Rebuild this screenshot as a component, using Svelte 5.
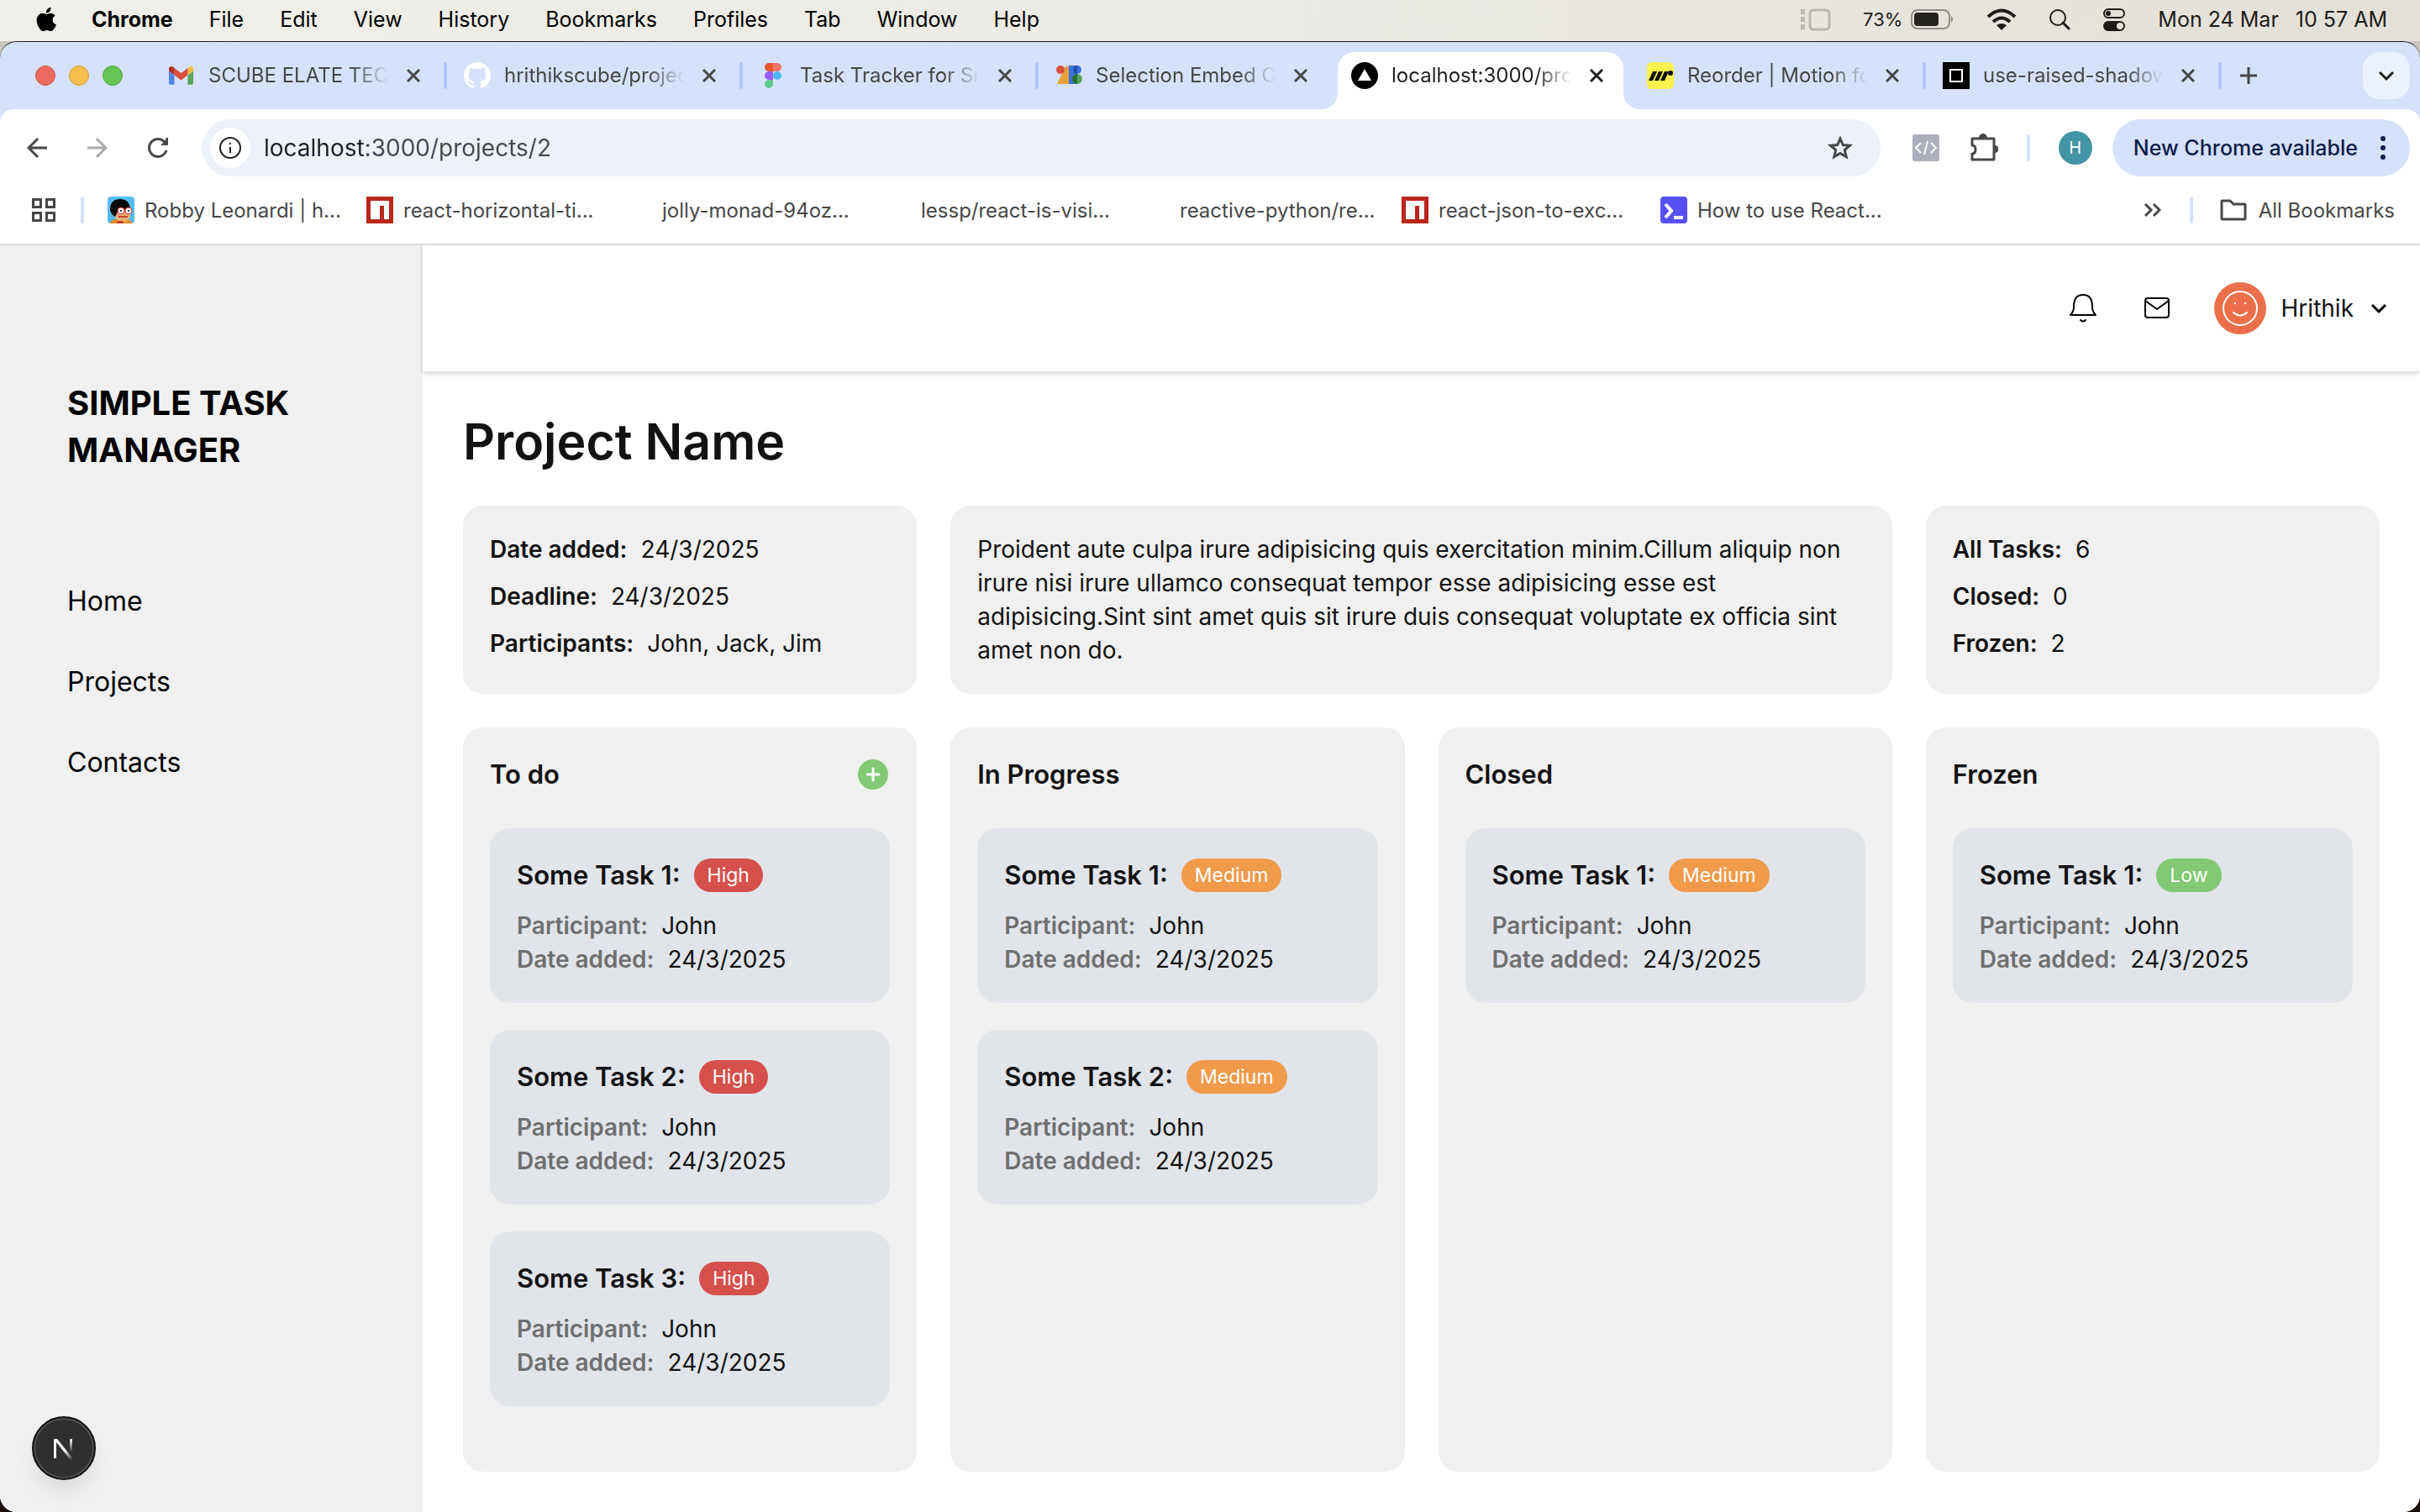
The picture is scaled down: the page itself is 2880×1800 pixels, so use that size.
<script>
  const menus = ['File', 'Edit', 'View', 'History', 'Bookmarks', 'Profiles', 'Tab', 'Window', 'Help'];

  const tabs = [
    { icon: 'gmail', title: 'SCUBE ELATE TECH' },
    { icon: 'github', title: 'hrithikscube/project' },
    { icon: 'figma', title: 'Task Tracker for Small' },
    { icon: 'shapes', title: 'Selection Embed Co' },
    { icon: 'vercel', title: 'localhost:3000/projects', active: true },
    { icon: 'motion', title: 'Reorder | Motion for' },
    { icon: 'sandbox', title: 'use-raised-shadow' }
  ];

  const bookmarks = [
    { icon: 'robby', title: 'Robby Leonardi | h...' },
    { icon: 'npm', title: 'react-horizontal-ti...' },
    { icon: '', title: 'jolly-monad-94oz...' },
    { icon: '', title: 'lessp/react-is-visi...' },
    { icon: '', title: 'reactive-python/re...' },
    { icon: 'npm', title: 'react-json-to-exc...' },
    { icon: 'prompt', title: 'How to use React...' }
  ];

  const nav = ['Home', 'Projects', 'Contacts'];

  const details = [
    ['Date added:', '24/3/2025'],
    ['Deadline:', '24/3/2025'],
    ['Participants:', 'John, Jack, Jim']
  ];
  const totals = [
    ['All Tasks:', '6'],
    ['Closed:', '0'],
    ['Frozen:', '2']
  ];

  const columns = [
    { name: 'To do', canAdd: true, priority: 'High', tasks: ['Some Task 1:', 'Some Task 2:', 'Some Task 3:'] },
    { name: 'In Progress', priority: 'Medium', tasks: ['Some Task 1:', 'Some Task 2:'] },
    { name: 'Closed', priority: 'Medium', tasks: ['Some Task 1:'] },
    { name: 'Frozen', priority: 'Low', tasks: ['Some Task 1:'] }
  ];

  let url = $state('localhost:3000/projects/2');
</script>

{#snippet favicon(name)}
  <svg class="favicon" viewBox="0 0 32 32" aria-hidden="true">
    {#if name === 'gmail'}
      <g transform="translate(1 5) scale(.33) translate(-52 -42)">
        <path fill="#4f86ec" d="M58 108h14V74L52 59v43c0 3.3 2.7 6 6 6" />
        <path fill="#58a55c" d="M120 108h14c3.3 0 6-2.7 6-6V59l-20 15" />
        <path fill="#f2bd42" d="M120 48v26l20-15v-8c0-7.4-8.5-11.6-14.4-7.2" />
        <path fill="#d95140" d="M72 74V48l24 18 24-18v26L96 92" />
        <path fill="#b5332a" d="M52 51v8l20 15V48l-5.6-4.2c-5.9-4.4-14.4-.2-14.4 7.2" />
      </g>
    {:else if name === 'github'}
      <path fill="#fff" transform="scale(2)" d="M8 0C3.58 0 0 3.58 0 8c0 3.54 2.29 6.53 5.47 7.59.4.07.55-.17.55-.38 0-.19-.01-.82-.01-1.49-2.01.37-2.53-.49-2.69-.94-.09-.23-.48-.94-.82-1.13-.28-.15-.68-.52-.01-.53.63-.01 1.08.58 1.23.82.72 1.21 1.87.87 2.33.66.07-.52.28-.87.51-1.07-1.78-.2-3.64-.89-3.64-3.95 0-.87.31-1.59.82-2.15-.08-.2-.36-1.02.08-2.12 0 0 .67-.21 2.2.82.64-.18 1.32-.27 2-.27s1.36.09 2 .27c1.53-1.04 2.2-.82 2.2-.82.44 1.1.16 1.92.08 2.12.51.56.82 1.27.82 2.15 0 3.07-1.87 3.75-3.65 3.95.29.25.54.73.54 1.48 0 1.07-.01 1.93-.01 2.2 0 .21.15.46.55.38A8.01 8.01 0 0 0 16 8c0-4.42-3.58-8-8-8z" />
    {:else if name === 'figma'}
      <path fill="#e5592f" d="M16 1h-5a5 5 0 0 0 0 10h5z" />
      <path fill="#f0766b" d="M16 1h5a5 5 0 0 1 0 10h-5z" />
      <path fill="#9b5cf6" d="M16 11h-5a5 5 0 0 0 0 10h5z" />
      <circle cx="21" cy="16" r="5" fill="#50b7f8" />
      <path fill="#5ecb8b" d="M11 21h5v5a5 5 0 1 1-5-5z" />
    {:else if name === 'shapes'}
      <path fill="#e8a13a" d="M12 5h5v21H2z" />
      <circle cx="6" cy="9" r="5" fill="#d9503f" />
      <path fill="#3b72dc" d="M16 4h10v22H16z" />
      <circle cx="26" cy="9" r="5" fill="#3b72dc" />
      <path fill="#2450a8" d="M26 4v10a5 5 0 0 1 0-10z" />
      <circle cx="26" cy="20" r="6" fill="#56a55b" />
      <path fill="#2b6a35" d="M26 14v12a6 6 0 0 1 0-12z" />
    {:else if name === 'vercel'}
      <circle cx="16" cy="16" r="16" fill="#000" />
      <path fill="#fff" d="M16 8l8 14H8z" />
    {:else if name === 'motion'}
      <rect width="32" height="32" rx="6" fill="#fdf250" />
      <path fill="#111" d="M7 11h5L7 22H2zM14 11h5l-5 11H9zM21 11h5l-5 11h-5z" />
      <circle cx="28" cy="13" r="3" fill="#111" />
    {:else if name === 'sandbox'}
      <rect width="32" height="32" fill="#000" />
      <rect x="9" y="9" width="14" height="14" fill="none" stroke="#fff" stroke-width="2" />
    {:else if name === 'npm'}
      <rect width="32" height="32" fill="#b9261c" />
      <path fill="#fff" d="M5 5h22v22h-6V11h-5v16H5z" />
    {:else if name === 'robby'}
      <rect width="32" height="32" rx="4" fill="#56bcf2" />
      <path fill="#e98c28" d="M2 32q4-6 14-5 11-1 14 5z" />
      <path fill="#e9b27c" d="M5 14h22v10q-2 6-9 6t-9-6l-5-4z" />
      <path fill="#080808" d="M3 16Q3 3 15 3q11 0 12 12l-14 1-4 8-4-3z" />
      <g fill="#fff" stroke="#d8262c">
        <circle cx="16" cy="17" r="4" />
        <circle cx="25" cy="17" r="4" />
      </g>
      <circle cx="16" cy="17" r="1" />
      <circle cx="25" cy="17" r="1" />
      <path fill="#c8452c" d="M13 23h11v2H13zM11 29h8v3h-8z" />
    {:else if name === 'prompt'}
      <rect width="32" height="32" rx="4" fill="#5651f5" />
      <path fill="none" stroke="#fff" stroke-width="4" d="M6 9l7 8-7 8M16 25h11" />
    {/if}
  </svg>
{/snippet}

<div class="desktop">
  <div class="menubar">
    <svg class="apple" viewBox="0 0 27 32" aria-hidden="true">
      <path d="M22.6 17c0-3.500 2.600-5.100 2.800-5.200-1.600-2.300-4-2.600-4.800-2.700-2-.2-4 1.200-5 1.200s-2.600-1.200-4.300-1.100c-2.200 0-4.300 1.300-5.400 3.300-2.400 4.100-.6 10.100 1.700 13.400 1.100 1.600 2.500 3.400 4.200 3.400 1.700-.1 2.300-1.100 4.400-1.100s2.600 1.100 4.400 1c1.800 0 3-1.600 4.100-3.300 1.300-1.900 1.800-3.700 1.900-3.800-.1 0-4-1.500-4-5.100zM19.300 7c.9-1.200 1.500-2.700 1.400-4.300-1.400.1-3 .9-4 2.100-.9 1-1.600 2.600-1.400 4.100 1.500.1 3.100-.8 4-1.900z" />
    </svg>
    <strong>Chrome</strong>
    {#each menus as m}<span>{m}</span>{/each}
    <div class="status">
      <svg class="stage" viewBox="0 0 36 28" width="36" height="28" aria-hidden="true">
        <path fill="#b9b7b1" d="M0 2h5v6H0zM0 11h5v6H0zM0 20h5v6H0z" />
        <rect x="11" y="3" width="23" height="23" rx="4" fill="none" stroke="#b9b7b1" stroke-width="3" />
      </svg>
      <span class="battery">
        <span>73%</span>
        <svg viewBox="0 0 52 26" width="52" height="26" aria-hidden="true">
          <rect x="1" y="2" width="45" height="22" rx="7" fill="none" stroke="#8f8d88" stroke-width="2" />
          <rect x="4" y="5" width="29" height="16" rx="4" fill="#242320" />
          <path fill="#8f8d88" d="M48 9q4 4 0 8z" />
        </svg>
      </span>
      <svg viewBox="0 0 36 26" width="36" height="26" aria-hidden="true">
        <path fill="none" stroke="#1d1c1a" stroke-width="4" d="M2 10q16-15 32 0M8 16q10-9 20 0" />
        <path fill="#1d1c1a" d="M12 20q6-4 12 0l-6 6z" />
      </svg>
      <svg viewBox="0 0 26 26" width="26" height="26" aria-hidden="true">
        <circle cx="11" cy="11" r="9" fill="none" stroke="#1d1c1a" stroke-width="2" />
        <path d="M17 17l7 7" stroke="#1d1c1a" stroke-width="3" stroke-linecap="round" />
      </svg>
      <svg viewBox="0 0 28 28" width="28" height="28" aria-hidden="true">
        <rect x="2" y="2" width="24" height="10" rx="5" fill="none" stroke="#1d1c1a" stroke-width="2" />
        <circle cx="7" cy="7" r="3" fill="#1d1c1a" />
        <rect x="1" y="16" width="26" height="12" rx="6" fill="#1d1c1a" />
        <circle cx="21" cy="22" r="4" fill="#e5e3dc" />
      </svg>
      <span class="clock"><span>Mon 24 Mar</span><span>10 57 AM</span></span>
    </div>
  </div>

  <div class="window">
    <div class="tabstrip">
      <div class="lights">
        <button class="light red" aria-label="Close window"></button>
        <button class="light yellow" aria-label="Minimise window"></button>
        <button class="light green" aria-label="Zoom window"></button>
      </div>
      {#each tabs as tab, i}
        <div class="tab" class:active={tab.active}>
          {@render favicon(tab.icon)}
          <span class="tab-title">{tab.title}</span>
          <button class="close" aria-label="Close tab">
            <svg viewBox="0 0 16 16" width="16" height="16"><path d="M1 1l14 14M15 1L1 15" /></svg>
          </button>
          <i class="sep" class:hidden={tab.active || tabs[i + 1]?.active}></i>
        </div>
      {/each}
      <button class="plus" aria-label="New tab">
        <svg viewBox="0 0 20 20" width="20" height="20"><path d="M10 0v20M0 10h20" /></svg>
      </button>
      <button class="tab-search" aria-label="Search tabs">
        <svg viewBox="0 0 20 20" width="20" height="20"><path d="M2 6l8 8 8-8" /></svg>
      </button>
    </div>

    <div class="chrome">
      <div class="toolbar">
        <button aria-label="Back">
          <svg viewBox="0 0 24 24" width="36" height="36"><path fill="#474747" d="M20 11H7.800l5.600-5.600L12 4l-8 8 8 8 1.400-1.400L7.800 13H20z" /></svg>
        </button>
        <button aria-label="Forward">
          <svg viewBox="0 0 24 24" width="36" height="36"><path fill="#ababab" d="M4 11h12.200l-5.600-5.600L12 4l8 8-8 8-1.400-1.400 5.600-5.600H4z" /></svg>
        </button>
        <button aria-label="Reload">
          <svg viewBox="0 0 24 24" width="36" height="36"><path fill="#474747" d="M17.650 6.350A7.960 7.960 0 0 0 12 4a8 8 0 1 0 7.730 10h-2.080A6 6 0 1 1 12 6c1.660 0 3.140.69 4.220 1.780L14 10h6V4h-1.600z" /></svg>
        </button>
        <div class="omnibox">
          <span class="info">
            <svg viewBox="0 0 26 26" width="26" height="26" aria-hidden="true">
              <circle cx="13" cy="13" r="12" fill="none" stroke="#1f1f1f" stroke-width="2" />
              <path d="M13 12v7M13 7v2" stroke="#1f1f1f" stroke-width="2" />
            </svg>
          </span>
          <input aria-label="Address" bind:value={url} />
          <button aria-label="Bookmark this page">
            <svg viewBox="0 0 32 32" width="32" height="32"><path fill="none" stroke="#474747" stroke-width="3" d="M16 5l3.300 7.500 8.200.7-6.200 5.400 1.900 8L16 22.400l-7.200 4.200 1.900-8-6.200-5.400 8.200-.7z" /></svg>
          </button>
        </div>
        <div class="extensions">
          <button aria-label="Developer tools">
            <svg viewBox="0 0 32 32" width="32" height="32">
              <rect width="32" height="32" rx="2" fill="#adb0bb" />
              <path fill="none" stroke="#fff" stroke-width="2" d="M10 10l-6 6 6 6M22 10l6 6-6 6M18 8l-4 16" />
            </svg>
          </button>
          <button aria-label="Extensions">
            <svg viewBox="0 0 36 36" width="36" height="36">
              <path fill="none" stroke="#474747" stroke-width="3" stroke-linejoin="round" d="M5 7h26v25H5v-7q4 0 4-5t-4-5z" />
              <path fill="#474747" d="M13 6a5 5 0 0 1 10 0zM32 15a4 4 0 0 1 0 9z" />
            </svg>
          </button>
          <i class="sep pale"></i>
          <button class="profile" aria-label="Profile">H</button>
        </div>
        <button class="update">
          New Chrome available
          <svg viewBox="0 0 8 28" width="8" height="28" aria-hidden="true"><circle cx="4" cy="3" r="3" /><circle cx="4" cy="14" r="3" /><circle cx="4" cy="25" r="3" /></svg>
        </button>
      </div>

      <div class="bookmarks">
        <button aria-label="Apps">
          <svg viewBox="0 0 32 32" width="32" height="32"><path fill="none" stroke="#474747" stroke-width="3" d="M3.500 3.500h9v9h-9zM19.500 3.500h9v9h-9zM3.500 19.500h9v9h-9zM19.500 19.500h9v9h-9z" /></svg>
        </button>
        <i class="sep pale"></i>
        <div class="links">
          {#each bookmarks as b}
            <a href="#bookmark">{@render favicon(b.icon)}<span>{b.title}</span></a>
          {/each}
        </div>
        <button class="more" aria-label="More bookmarks">
          <svg viewBox="0 0 20 18" width="20" height="18"><path fill="none" stroke="#474747" stroke-width="3" d="M1 2l7 7-7 7M11 2l7 7-7 7" /></svg>
        </button>
        <i class="sep pale"></i>
        <button class="all">
          <svg viewBox="0 0 32 26" width="32" height="26" aria-hidden="true"><path fill="none" stroke="#474747" stroke-width="3" stroke-linejoin="round" d="M2 3q0-1 1-1h9l4 4h13q1 0 1 1v16q0 1-1 1H3q-1 0-1-1z" /></svg>
          All Bookmarks
        </button>
      </div>
    </div>

    <div class="app">
      <aside>
        <h2>SIMPLE TASK MANAGER</h2>
        <nav>
          {#each nav as n}<a href="#{n}">{n}</a>{/each}
        </nav>
      </aside>

      <div class="content">
        <header>
          <button aria-label="Notifications">
            <svg viewBox="0 0 40 40" width="40" height="40"><path fill="none" stroke="#000" stroke-width="2" stroke-linecap="round" stroke-linejoin="round" d="M5 28h30q-4-4-4-10C31 9 27 4 20 4S9 9 9 18q0 6-4 10zM17 34q3 3 6 0" /></svg>
          </button>
          <button aria-label="Messages">
            <svg viewBox="0 0 40 40" width="40" height="40"><g fill="none" stroke="#000" stroke-width="2" stroke-linejoin="round"><rect x="6" y="8" width="28" height="23" rx="3" /><path d="M6 11l14 10 14-10" /></g></svg>
          </button>
          <button class="user">
            <svg viewBox="0 0 62 62" width="62" height="62" aria-hidden="true">
              <circle cx="31" cy="31" r="31" fill="#ec6f4b" />
              <g fill="none" stroke="#fff" stroke-width="2" stroke-linecap="round"><circle cx="31" cy="31" r="20" /><path d="M23 36q8 7 16 0" /></g>
              <path fill="#fff" d="M24 24h2v2h-2zM36 24h2v2h-2z" />
            </svg>
            <span>Hrithik</span>
            <svg class="caret" viewBox="0 0 24 24" width="24" height="24" aria-hidden="true"><path fill="none" stroke="#000" stroke-width="3" d="M4 8l8 8 8-8" /></svg>
          </button>
        </header>

        <main>
          <h1>Project Name</h1>
          <div class="board">
            <section class="panel facts">
              {#each details as [k, v]}<p><b>{k}</b><span>{v}</span></p>{/each}
            </section>
            <section class="panel about">
              <p>Proident aute culpa irure adipisicing quis exercitation minim.Cillum aliquip non irure nisi irure ullamco consequat tempor esse adipisicing esse est adipisicing.Sint sint amet quis sit irure duis consequat voluptate ex officia sint amet non do.</p>
            </section>
            <section class="panel facts">
              {#each totals as [k, v]}<p><b>{k}</b><span>{v}</span></p>{/each}
            </section>

            {#each columns as col}
              <section class="panel column">
                <div class="column-head">
                  <h3>{col.name}</h3>
                  {#if col.canAdd}
                    <button aria-label="Add task">
                      <svg viewBox="0 0 40 40" width="40" height="40"><circle cx="20" cy="20" r="18" fill="#82c973" /><path d="M20 13v14M13 20h14" stroke="#fff" stroke-width="3" stroke-linecap="round" /></svg>
                    </button>
                  {/if}
                </div>
                <div class="cards">
                  {#each col.tasks as task}
                    <article>
                      <div class="card-head">
                        <h4>{task}</h4>
                        <span class="pill {col.priority.toLowerCase()}">{col.priority}</span>
                      </div>
                      <p><b>Participant:</b><span>John</span></p>
                      <p><b>Date added:</b><span>24/3/2025</span></p>
                    </article>
                  {/each}
                </div>
              </section>
            {/each}
          </div>
        </main>
      </div>
      <button class="devtools" aria-label="Next.js dev tools">
        <svg viewBox="0 0 40 40" width="40" height="40" aria-hidden="true">
          <defs>
            <linearGradient id="diag" x1="22" y1="22" x2="31" y2="33" gradientUnits="userSpaceOnUse"><stop stop-color="#fff" /><stop offset="1" stop-color="#fff" stop-opacity="0" /></linearGradient>
            <linearGradient id="stem" x1="0" y1="9" x2="0" y2="25" gradientUnits="userSpaceOnUse"><stop stop-color="#fff" /><stop offset="1" stop-color="#fff" stop-opacity="0" /></linearGradient>
          </defs>
          <path fill="url(#diag)" d="M8 9h4l21 26-3 2L12 14z" />
          <path fill="#fff" d="M8 9h3v23H8z" />
          <path fill="url(#stem)" d="M27 9h3v16h-3z" />
        </svg>
      </button>
    </div>
  </div>
</div>

<style>
  :global(body) { background: #1b0f0a; }
  .desktop, .desktop :global(*) { box-sizing: border-box; }
  .desktop {
    min-height: 100vh;
    display: flex;
    flex-direction: column;
    font-family: Inter, 'Liberation Sans', sans-serif;
    background: linear-gradient(#c9c5bc 0 200px, #1b0f0a 200px);
  }
  h1, h2, h3, h4, p { margin: 0; font-weight: 600; }
  button { font: inherit; color: inherit; border: 0; padding: 0; margin: 0; background: none; display: flex; align-items: center; }
  a { color: inherit; text-decoration: none; }
  svg { flex: none; display: block; }
  i.sep { flex: none; width: 4px; height: 32px; border-radius: 2px; background: #aec7f7; }
  i.pale { background: #d5e1fb; }
  i.hidden { visibility: hidden; }

  .menubar {
    height: 49px;
    padding: 0 39px 3px 38px;
    display: flex;
    align-items: center;
    gap: 43px;
    font-size: 25px;
    color: #000;
    background: linear-gradient(90deg, #f0efea, #ebeae4 50%, #e3e0d8);
  }
  .apple { width: 30px; height: 34px; margin-right: -2px; }
  .status { margin-left: auto; display: flex; align-items: center; gap: 38px; color: #1d1c1a; }
  .battery { display: flex; align-items: center; gap: 10px; font-size: 22px; }
  .clock { display: flex; gap: 20px; }

  .window {
    flex: 1;
    display: flex;
    flex-direction: column;
    overflow: hidden;
    border-top: 1px solid #1c1c1c;
    border-radius: 20px;
    background: #d6e1fb;
  }
  .tabstrip { height: 80px; display: flex; align-items: stretch; color: #474747; font-size: 24px; }
  .lights { flex: none; width: 178px; padding-left: 42px; display: flex; align-items: center; gap: 16px; }
  .light { width: 24px; height: 24px; border-radius: 50%; border: 1px solid; }
  .red { background: #ed6a5e; border-color: #d55549; }
  .yellow { background: #f5bf4f; border-color: #d9a03b; }
  .green { background: #62c554; border-color: #51a73f; }
  .tab { position: relative; flex: 0 1 352px; min-width: 0; padding-left: 22px; display: flex; align-items: center; }
  .favicon { position: relative; width: 32px; height: 32px; }
  .tab-title {
    position: relative;
    flex: 1;
    min-width: 0;
    margin: 0 16px;
    overflow: hidden;
    white-space: nowrap;
    line-height: 36px;
    mask-image: linear-gradient(90deg, #000 80%, transparent);
  }
  .close { position: relative; width: 28px; height: 28px; margin-right: 22px; justify-content: center; }
  .close path, .plus path { stroke: #474747; stroke-width: 3; fill: none; }
  .tab .sep { margin-right: -2px; }
  .tab:not(.active) .sep { z-index: 1; }
  .active { color: #1f1f1f; }
  .active .close path { stroke: #1f1f1f; }
  .active::before { content: ''; position: absolute; left: 6px; right: 6px; top: 12px; bottom: 0; border-radius: 20px 20px 0 0; background: #fff; }
  .active::after {
    content: '';
    position: absolute;
    left: -14px;
    right: -14px;
    bottom: 0;
    height: 20px;
    background:
      radial-gradient(circle at 0 0, transparent 20px, #fff 20px) left / 20px 20px no-repeat,
      radial-gradient(circle at 100% 0, transparent 20px, #fff 20px) right / 20px 20px no-repeat;
  }
  .plus { margin-left: 24px; }
  .tab-search { width: 56px; height: 56px; margin: auto 12px auto auto; border-radius: 20px; background: #ebf2fd; justify-content: center; }
  .tab-search path { fill: none; stroke: #1f1f1f; stroke-width: 3; }

  .chrome { background: #fff; border-radius: 16px 16px 0 0; border-bottom: 2px solid #e0e0e0; color: #474747; }
  .toolbar { display: flex; align-items: center; gap: 36px; padding: 12px 12px 12px 26px; }
  .omnibox { flex: 1; height: 68px; margin: 0 2px 0 -2px; padding: 0 32px 0 10px; display: flex; align-items: center; border-radius: 34px; background: #edf1fa; }
  .info { width: 48px; height: 48px; margin-right: 16px; display: grid; place-items: center; border-radius: 50%; background: #fff; }
  .omnibox input {
    flex: 1;
    min-width: 0;
    padding: 0;
    border: 0;
    outline: 0;
    font: 28px/40px Inter, 'Liberation Sans', sans-serif;
    color: transparent;
    background: linear-gradient(90deg, #1f1f1f 123px, #474747 123px) text;
  }
  .extensions { display: flex; align-items: center; gap: 34px; }
  .profile { width: 40px; height: 40px; border-radius: 50%; background: #4295a5; color: #fff; font-size: 20px; justify-content: center; }
  .update { height: 68px; margin-left: -12px; padding: 0 28px 0 25px; gap: 26px; border-radius: 34px; background: #d6e1fb; color: #0a1d4d; font-size: 25px; font-weight: 500; }
  .update svg { fill: #0a1d4d; }
  .bookmarks { display: flex; align-items: center; gap: 28px; height: 56px; margin-bottom: 12px; padding: 0 30px 0 36px; font-size: 24px; }
  .links { flex: 1; min-width: 0; display: flex; }
  .links a { flex: 0 1 308px; display: flex; align-items: center; gap: 12px; white-space: nowrap; }
  .more { margin-right: 6px; }
  .all { gap: 14px; margin-left: 4px; }

  .app { position: relative; flex: 1; display: grid; grid-template-columns: 503px minmax(0, 1fr); color: #121212; background: #fff; }
  aside { padding: 160px 80px; background: #f0f0f0; color: #000; }
  h2 { margin-bottom: 128px; font-size: 40px; line-height: 56px; font-weight: 700; }
  nav { display: flex; flex-direction: column; gap: 48px; font-size: 32px; line-height: 48px; }
  .content { display: flex; flex-direction: column; }
  header { height: 150px; padding-right: 37px; display: flex; align-items: center; justify-content: flex-end; gap: 48px; box-shadow: 0 2px 6px rgb(0 0 0 / .2); }
  .user { gap: 18px; font-size: 28px; }
  main { flex: 1; display: flex; flex-direction: column; padding: 48px; }
  h1 { margin-bottom: 40px; font-size: 59px; line-height: 72px; }
  .board { flex: 1; display: grid; grid-template-columns: repeat(4, minmax(0, 1fr)); grid-template-rows: auto 1fr; gap: 40px; font-size: 28px; line-height: 40px; }
  .panel { padding: 32px; border-radius: 24px; background: #f0f0f0; }
  .about { grid-column: span 2; }
  .facts { display: flex; flex-direction: column; gap: 16px; }
  p { font-weight: 400; }
  b { margin-right: 16px; font-weight: 600; }
  .column-head { height: 48px; margin-bottom: 40px; display: flex; align-items: center; justify-content: space-between; }
  h3, h4 { font-size: 31px; line-height: 48px; }
  .cards { display: flex; flex-direction: column; gap: 32px; }
  article { padding: 32px; border-radius: 24px; background: #e1e4e9; }
  article b { color: #6f6f6f; }
  .card-head { display: flex; align-items: center; gap: 16px; margin-bottom: 16px; }
  .pill { padding: 0 16px; border-radius: 20px; font-size: 23px; line-height: 40px; color: #fff; }
  .high { background: #d5504c; }
  .medium { background: #f09b4c; }
  .low { background: #82c973; }
  .devtools {
    position: absolute;
    left: 38px;
    bottom: 38px;
    width: 76px;
    height: 76px;
    justify-content: center;
    border-radius: 50%;
    border: 2px solid #121212;
    background: #2f2f2f;
    box-shadow: inset 0 0 0 2px #505050, 0 16px 32px -8px rgb(0 0 0 / .12);
  }
</style>
